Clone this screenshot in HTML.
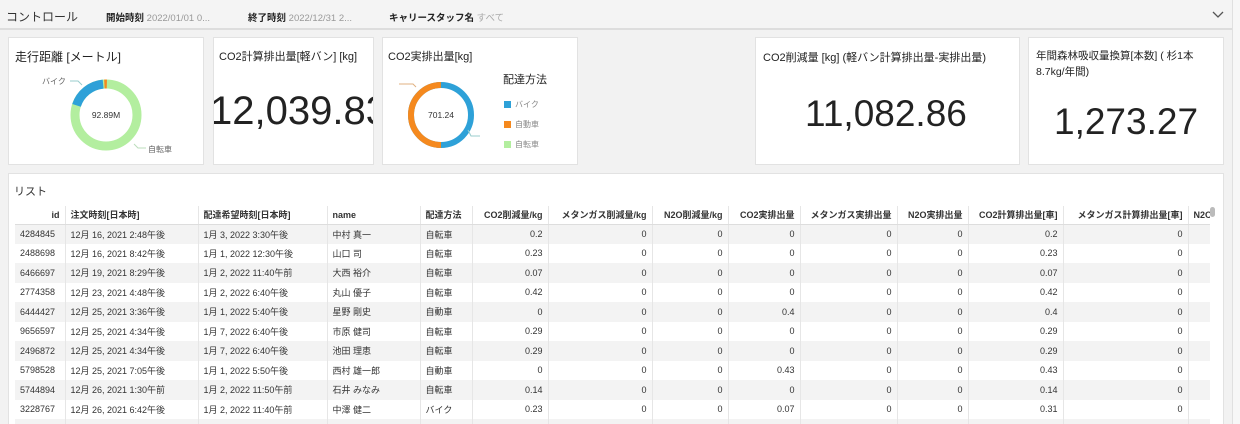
<!DOCTYPE html><html style="width:1240px;height:424px;overflow:hidden"><head><meta charset="utf-8"><style>
*{margin:0;padding:0;box-sizing:border-box}
body{width:1240px;height:424px;overflow:hidden;background:#f2f2f2;font-family:"Liberation Sans","Noto Sans CJK JP",sans-serif;color:#222;position:relative}
.a{position:absolute}
.card{position:absolute;background:#fff;border:1px solid #e2e2e2;top:37px;height:128px}
.t{font-size:11px;color:#222}
table{border-collapse:collapse;table-layout:fixed;font-size:9px;color:#333}
td,th{height:19.5px;padding:0 5px;white-space:nowrap;overflow:hidden;border-right:1px solid #e6e6e6}
th{font-weight:bold;background:#fff;height:18px;border-bottom:1px solid #ddd}
tr:nth-child(even) td{background:#f3f3f3}
.r{text-align:right}
.lg{position:absolute;left:121px;width:7px;height:7px}
.lt{position:absolute;left:132px;font-size:8px;color:#888}
</style></head><body>
<div class="a" style="left:0;top:0;width:1232px;height:30px;border-bottom:2px solid #ddd;background:#f4f4f4"></div>
<div class="a" style="left:1232px;top:0;width:8px;height:424px;background:#f7f7f7;border-left:1px solid #e0e0e0"></div>
<div class="a" style="left:6px;top:8px;font-size:12px;color:#333">コントロール</div>
<div class="a" style="left:106px;top:10px;font-size:9.5px"><b>開始時刻</b> <span style="color:#999">2022/01/01 0...</span></div>
<div class="a" style="left:248px;top:10px;font-size:9.5px"><b>終了時刻</b> <span style="color:#999">2022/12/31 2...</span></div>
<div class="a" style="left:389px;top:10px;font-size:9.5px"><b>キャリースタッフ名</b> <span style="color:#aaa">すべて</span></div>
<svg class="a" style="left:1212px;top:11px" width="12" height="8"><path d="M1 1l5 5 5-5" fill="none" stroke="#555" stroke-width="1.3"/></svg>

<div class="card" style="left:8px;width:196px">
<div class="a t" style="left:6px;top:10px;font-size:12px">走行距離 [メートル]</div>
<svg class="a" style="left:0;top:30px" width="196" height="98">
<circle cx="97" cy="47" r="31" fill="none" stroke="#b3ee9f" stroke-width="9"/>
<circle cx="97" cy="47" r="31" fill="none" stroke="#2ea1d8" stroke-width="9" stroke-dasharray="36 300" transform="rotate(-162 97 47)"/>
<circle cx="97" cy="47" r="31" fill="none" stroke="#f5891e" stroke-width="9" stroke-dasharray="2.5 300" transform="rotate(-93 97 47)"/>
<path d="M61 13h8l4 4" fill="none" stroke="#9cc" stroke-width="1"/>
<path d="M125 76l4 4h8" fill="none" stroke="#bdb" stroke-width="1"/>
<text x="33" y="16" font-size="8" fill="#666">バイク</text>
<text x="139" y="84" font-size="8" fill="#666">自転車</text>
<text x="97" y="50" font-size="8.5" fill="#333" text-anchor="middle">92.89M</text>
</svg></div>

<div class="card" style="left:213px;width:161px;overflow:hidden">
<div class="a t" style="left:5px;top:10px;font-size:11px">CO2計算排出量[軽バン] [kg]</div>
<div class="a" style="left:-4px;top:51px;font-size:40px;white-space:nowrap">12,039.83</div>
</div>

<div class="card" style="left:382px;width:196px">
<div class="a t" style="left:5px;top:10px;font-size:11px">CO2実排出量[kg]</div>
<div class="a" style="left:120px;top:33px;font-size:11px">配達方法</div>
<svg class="a" style="left:0;top:30px" width="120" height="98">
<circle cx="58" cy="47" r="30" fill="none" stroke="#2ea1d8" stroke-width="6"/>
<circle cx="58" cy="47" r="30" fill="none" stroke="#f5891e" stroke-width="6" stroke-dasharray="94 300" transform="rotate(90 58 47)"/>
<path d="M16 16h14l3 3" fill="none" stroke="#e0b080" stroke-width="1"/>
<path d="M85 62l3 6h9" fill="none" stroke="#9cc" stroke-width="1"/>
<text x="58" y="50" font-size="8.5" fill="#333" text-anchor="middle">701.24</text>
</svg>
<div class="lg" style="top:63px;background:#2ea1d8"></div><div class="lt" style="top:61px">バイク</div>
<div class="lg" style="top:83px;background:#f5891e"></div><div class="lt" style="top:81px">自動車</div>
<div class="lg" style="top:103px;background:#b3ee9f"></div><div class="lt" style="top:101px">自転車</div>
</div>

<div class="card" style="left:755px;width:265px">
<div class="a t" style="left:7px;top:11px;font-size:11px">CO2削減量 [kg] (軽バン計算排出量-実排出量)</div>
<div class="a" style="left:49px;top:55px;font-size:37px">11,082.86</div>
</div>
<div class="card" style="left:1028px;width:196px">
<div class="a t" style="left:7px;top:10px;font-size:10.5px;line-height:16px">年間森林吸収量換算[本数] ( 杉1本<br>8.7kg/年間)</div>
<div class="a" style="left:25px;top:63px;font-size:37px">1,273.27</div>
</div>

<div class="a" style="left:8px;top:173px;width:1216px;height:260px;background:#fff;border:1px solid #e2e2e2"></div>
<div class="a" style="left:14px;top:183px;font-size:11px;color:#333">リスト</div>
<div class="a" style="left:1210px;top:207px;width:5px;height:10px;background:#bbb;border-radius:3px"></div>
<div class="a" style="left:15px;top:206px;width:1195px;height:218px;overflow:hidden">
<table style="width:1240px">
<colgroup><col style="width:50px"><col style="width:133px"><col style="width:129px"><col style="width:93px"><col style="width:52px"><col style="width:76px"><col style="width:104px"><col style="width:76px"><col style="width:72px"><col style="width:97px"><col style="width:71px"><col style="width:95px"><col style="width:125px"><col style="width:67px"></colgroup>
<tr><th class="r">id</th><th style="text-align:left">注文時刻[日本時]</th><th style="text-align:left">配達希望時刻[日本時]</th><th style="text-align:left">name</th><th style="text-align:left">配達方法</th><th class="r">CO2削減量/kg</th><th class="r">メタンガス削減量/kg</th><th class="r">N2O削減量/kg</th><th class="r">CO2実排出量</th><th class="r">メタンガス実排出量</th><th class="r">N2O実排出量</th><th class="r">CO2計算排出量[車]</th><th class="r">メタンガス計算排出量[車]</th><th style="text-align:left">N2O</th></tr>
<tr><td>4284845</td><td>12月 16, 2021 2:48午後</td><td>1月 3, 2022 3:30午後</td><td>中村 真一</td><td>自転車</td><td class="r">0.2</td><td class="r">0</td><td class="r">0</td><td class="r">0</td><td class="r">0</td><td class="r">0</td><td class="r">0.2</td><td class="r">0</td><td></td></tr>
<tr><td>2488698</td><td>12月 16, 2021 8:42午後</td><td>1月 1, 2022 12:30午後</td><td>山口 司</td><td>自転車</td><td class="r">0.23</td><td class="r">0</td><td class="r">0</td><td class="r">0</td><td class="r">0</td><td class="r">0</td><td class="r">0.23</td><td class="r">0</td><td></td></tr>
<tr><td>6466697</td><td>12月 19, 2021 8:29午後</td><td>1月 2, 2022 11:40午前</td><td>大西 裕介</td><td>自転車</td><td class="r">0.07</td><td class="r">0</td><td class="r">0</td><td class="r">0</td><td class="r">0</td><td class="r">0</td><td class="r">0.07</td><td class="r">0</td><td></td></tr>
<tr><td>2774358</td><td>12月 23, 2021 4:48午後</td><td>1月 2, 2022 6:40午後</td><td>丸山 優子</td><td>自転車</td><td class="r">0.42</td><td class="r">0</td><td class="r">0</td><td class="r">0</td><td class="r">0</td><td class="r">0</td><td class="r">0.42</td><td class="r">0</td><td></td></tr>
<tr><td>6444427</td><td>12月 25, 2021 3:36午後</td><td>1月 1, 2022 5:40午後</td><td>星野 剛史</td><td>自動車</td><td class="r">0</td><td class="r">0</td><td class="r">0</td><td class="r">0.4</td><td class="r">0</td><td class="r">0</td><td class="r">0.4</td><td class="r">0</td><td></td></tr>
<tr><td>9656597</td><td>12月 25, 2021 4:34午後</td><td>1月 7, 2022 6:40午後</td><td>市原 健司</td><td>自転車</td><td class="r">0.29</td><td class="r">0</td><td class="r">0</td><td class="r">0</td><td class="r">0</td><td class="r">0</td><td class="r">0.29</td><td class="r">0</td><td></td></tr>
<tr><td>2496872</td><td>12月 25, 2021 4:34午後</td><td>1月 7, 2022 6:40午後</td><td>池田 理恵</td><td>自転車</td><td class="r">0.29</td><td class="r">0</td><td class="r">0</td><td class="r">0</td><td class="r">0</td><td class="r">0</td><td class="r">0.29</td><td class="r">0</td><td></td></tr>
<tr><td>5798528</td><td>12月 25, 2021 7:05午後</td><td>1月 1, 2022 5:50午後</td><td>西村 雄一郎</td><td>自動車</td><td class="r">0</td><td class="r">0</td><td class="r">0</td><td class="r">0.43</td><td class="r">0</td><td class="r">0</td><td class="r">0.43</td><td class="r">0</td><td></td></tr>
<tr><td>5744894</td><td>12月 26, 2021 1:30午前</td><td>1月 2, 2022 11:50午前</td><td>石井 みなみ</td><td>自転車</td><td class="r">0.14</td><td class="r">0</td><td class="r">0</td><td class="r">0</td><td class="r">0</td><td class="r">0</td><td class="r">0.14</td><td class="r">0</td><td></td></tr>
<tr><td>3228767</td><td>12月 26, 2021 6:42午後</td><td>1月 2, 2022 11:40午前</td><td>中澤 健二</td><td>バイク</td><td class="r">0.23</td><td class="r">0</td><td class="r">0</td><td class="r">0.07</td><td class="r">0</td><td class="r">0</td><td class="r">0.31</td><td class="r">0</td><td></td></tr>
<tr><td>1234567</td><td>12月 27, 2021 1:00午後</td><td>1月 2, 2022 1:00午後</td><td>佐藤 一</td><td>自転車</td><td class="r">0.1</td><td class="r">0</td><td class="r">0</td><td class="r">0</td><td class="r">0</td><td class="r">0</td><td class="r">0.1</td><td class="r">0</td><td></td></tr>
</table></div>
</body></html>
